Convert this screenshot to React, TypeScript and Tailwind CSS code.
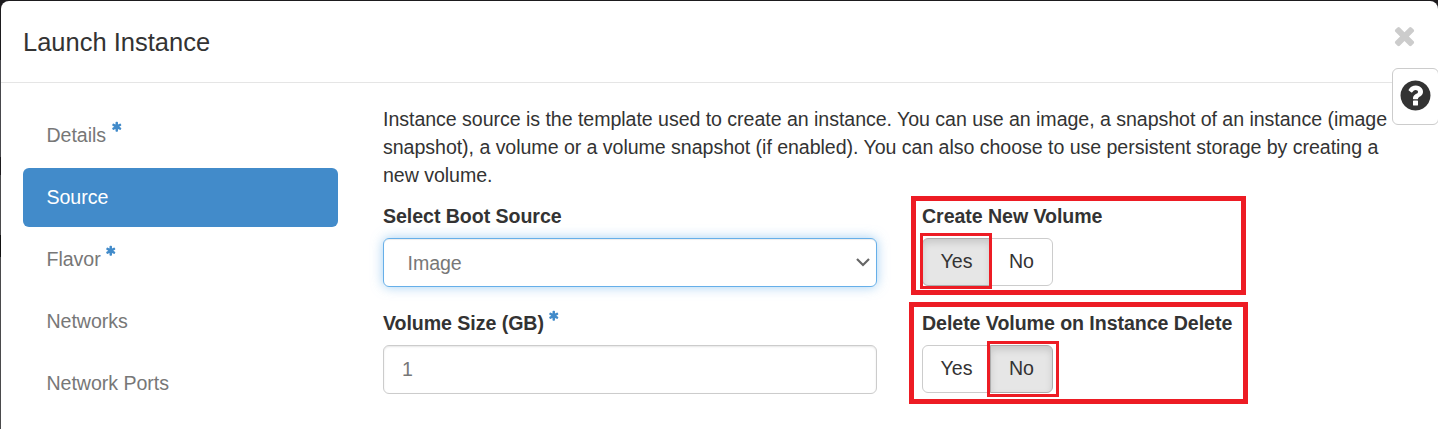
import type { ReactNode } from "react";

const ASTERISK =
  "M1546 1050q46 26 59.5 77.5t-12.5 97.5l-64 110q-26 46-77.5 59.5t-97.5-12.5l-266-153v307q0 52-38 90t-90 38h-128q-52 0-90-38t-38-90v-307l-266 153q-46 26-97.5 12.5t-77.5-59.5l-64-110q-26-46-12.5-97.5t59.5-77.5l266-154-266-154q-46-26-59.5-77.5t12.5-97.5l64-110q26-46 77.5-59.5t97.5 12.5l266 153v-307q0-52 38-90t90-38h128q52 0 90 38t38 90v307l266-153q46-26 97.5-12.5t77.5 59.5l64 110q26 46 12.5 97.5t-59.5 77.5l-266 154z";
const TIMES =
  "M1490 1322q0 40-28 68l-136 136q-28 28-68 28t-68-28l-294-294-294 294q-28 28-68 28t-68-28l-136-136q-28-28-28-68t28-68l294-294-294-294q-28-28-28-68t28-68l136-136q28-28 68-28t68 28l294 294 294-294q28-28 68-28t68 28l136 136q28 28 28 68t-28 68l-294 294 294 294q28 28 28 68z";
const QUESTION =
  "M1024 1376v-192q0-14-9-23t-23-9h-192q-14 0-23 9t-9 23v192q0 14 9 23t23 9h192q14 0 23-9t9-23zm256-672q0-88-55.5-163t-138.5-116-170-41q-243 0-371 213-15 24 8 42l132 100q7 6 19 6 16 0 25-12 53-68 86-92 34-24 86-24 48 0 85.5 26t37.5 59q0 38-20 61t-68 45q-63 28-115.5 86.5t-52.5 125.5v36q0 14 9 23t23 9h192q14 0 23-9t9-23q0-19 21.5-49.5t54.5-49.5q32-18 49-28.5t46-35 44.5-48 28-60.5 12.5-81zm384 192q0 209-103 385.5t-279.5 279.5-385.5 103-385.5-103-279.5-279.5-103-385.5 103-385.5 279.5-279.5 385.5-103 385.5 103 279.5 279.5 103 385.5z";

function Icon({ d, className }: { d: string; className: string }) {
  return (
    <svg viewBox="0 0 1792 1792" fill="currentColor" className={className} aria-hidden="true">
      <path d={d} />
    </svg>
  );
}

function Required() {
  return <Icon d={ASTERISK} className="mb-[15px] ml-[4.5px] size-[11.5px] shrink-0 text-[#428bca]" />;
}

function NavItem({ label, required, active }: { label: string; required?: boolean; active?: boolean }) {
  return (
    <li
      className={
        active
          ? "flex h-[59px] items-center rounded-[6px] bg-[#428bca] pb-[2px] pl-[23.5px] text-white"
          : "flex h-[59px] items-center pb-[2px] pl-[23.5px] text-[#777777]"
      }
    >
      {label}
      {required && <Required />}
    </li>
  );
}

function Label({ children, required }: { children: ReactNode; required?: boolean }) {
  return (
    <div className="mb-2 flex h-7 items-center font-bold tracking-[-0.06px] whitespace-nowrap">
      {children}
      {required && <Required />}
    </div>
  );
}

function YesNo({ value }: { value: "yes" | "no" }) {
  const on = "border-[#adadad] bg-[#e6e6e6] shadow-[inset_0_4px_7px_rgba(0,0,0,0.125)] z-10";
  const off = "border-[#cccccc] bg-white";
  return (
    <div className="flex h-[48px]">
      <button className={`relative w-[69px] rounded-l-[6px] border pb-[3px] ${value === "yes" ? on : off}`}>Yes</button>
      <button className={`relative -ml-px w-[63px] rounded-r-[6px] border pb-[3px] ${value === "no" ? on : off}`}>No</button>
    </div>
  );
}

export default function App() {
  return (
    <div className="h-[429px] w-[1438px] overflow-hidden bg-[linear-gradient(#1d1b1e_60px,#47484c_60px,#47484c_157px,#1d1b1e_157px,#1d1b1e_175px,#4a4a4c_175px,#4a4a4c_235px,#111111_235px,#111111_257px,#4a4a4c_257px)] pt-px font-['Liberation_Sans',Arial,sans-serif] text-[19.6px] leading-7 tracking-[-0.05px] text-[#333333]">
      <div className="relative ml-px h-[440px] w-[1437px] rounded-[8px] bg-white">
        <header className="flex h-[82px] items-center justify-between border-b border-[#e5e5e5] pr-[19px] pl-[22px]">
          <h1 className="text-[25.5px] leading-9 tracking-normal">Launch Instance</h1>
          <button aria-label="Close" className="mb-[13px] text-[#cccccc]">
            <Icon d={TIMES} className="size-[29px]" />
          </button>
        </header>

        <div className="flex pl-[22px]">
          <ul className="mt-[23px] flex w-[315px] flex-col gap-[3px]">
            <NavItem label="Details" required />
            <NavItem label="Source" active />
            <NavItem label="Flavor" required />
            <NavItem label="Networks" />
            <NavItem label="Network Ports" />
          </ul>

          <main className="mt-[22px] ml-[45px] w-[1033px]">
            <p className="mb-[13px]">
              Instance source is the template used to create an instance. You can use an image, a snapshot of an instance (image
              <br />
              snapshot), a volume or a volume snapshot (if enabled). You can also choose to use persistent storage by creating a
              <br />
              new volume.
            </p>
            <div className="grid grid-cols-[494px_1fr] gap-x-[45px] gap-y-[22px]">
              <div>
                <Label>Select Boot Source</Label>
                <div className="flex h-[49px] items-center justify-between rounded-[6px] border border-[#66afe9] pr-[5px] pl-[23.5px] text-[#777777] shadow-[inset_0_1px_1px_rgba(0,0,0,0.075),0_0_12px_rgba(102,175,233,0.6)]">
                  Image
                  <svg viewBox="0 0 16 10" className="mb-px h-[10px] w-4" fill="none" stroke="#666666" strokeWidth="2.2">
                    <path d="M2 2l6 6 6-6" />
                  </svg>
                </div>
              </div>
              <div>
                <Label>Create New Volume</Label>
                <YesNo value="yes" />
              </div>
              <div>
                <Label required>Volume Size (GB)</Label>
                <div className="flex h-[49px] items-center rounded-[6px] border border-[#cccccc] pb-[2px] pl-[18px] text-[#777777] shadow-[inset_0_1px_2px_rgba(0,0,0,0.1)]">
                  1
                </div>
              </div>
              <div>
                <Label>Delete Volume on Instance Delete</Label>
                <YesNo value="no" />
              </div>
            </div>
          </main>
        </div>

        <button
          aria-label="Help"
          className="absolute top-[67px] left-[1391px] flex h-[57px] w-[47px] items-center rounded-[6px] border border-[#cccccc] bg-white pb-[2px] pl-[5px]"
        >
          <Icon d={QUESTION} className="size-[35px] shrink-0" />
        </button>

        <div className="pointer-events-none absolute top-[195px] left-[910px] z-20 h-[99px] w-[335px] border-5 border-[#ed1c24]" />
        <div className="pointer-events-none absolute top-[232px] left-[919px] z-20 h-[56px] w-[72px] border-3 border-[#ed1c24]" />
        <div className="pointer-events-none absolute top-[301px] left-[908px] z-20 h-[102px] w-[339px] border-5 border-[#ed1c24]" />
        <div className="pointer-events-none absolute top-[340px] left-[986px] z-20 h-[56px] w-[72px] border-3 border-[#ed1c24]" />
      </div>
    </div>
  );
}
